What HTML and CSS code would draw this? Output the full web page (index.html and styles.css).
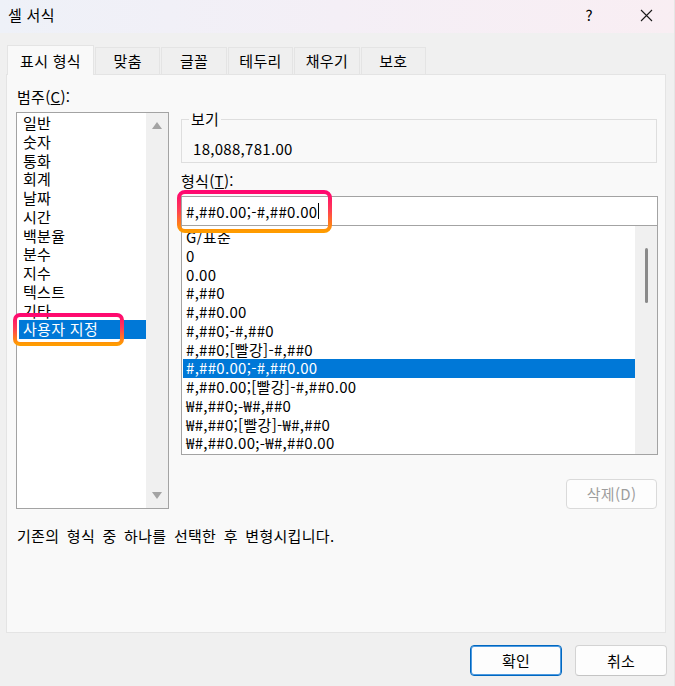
FILE: index.html
```html
<!DOCTYPE html>
<html lang="ko">
<head>
<meta charset="utf-8">
<title>셀 서식</title>
<link rel="stylesheet" href="styles.css">
</head>
<body>
<div class="window">
  <div class="titlebar">
    <span class="title">셀 서식</span>
    <span class="help">?</span>
    <span class="close">
      <svg width="13" height="13" viewBox="0 0 13 13"><path d="M1 1 L12 12 M12 1 L1 12" stroke="#1a1a1a" stroke-width="1.1" fill="none"/></svg>
    </span>
  </div>

  <div class="tabs">
    <div class="tab active">표시 형식</div>
    <div class="tab">맞춤</div>
    <div class="tab">글꼴</div>
    <div class="tab">테두리</div>
    <div class="tab">채우기</div>
    <div class="tab">보호</div>
  </div>

  <div class="panel">
    <div class="main">
      <div class="left-col">
        <div class="label">범주(<u>C</u>):</div>
        <div class="listbox cat-list">
          <ul class="items">
            <li>일반</li>
            <li>숫자</li>
            <li>통화</li>
            <li>회계</li>
            <li>날짜</li>
            <li>시간</li>
            <li>백분율</li>
            <li>분수</li>
            <li>지수</li>
            <li>텍스트</li>
            <li>기타</li>
            <li class="sel">사용자 지정</li>
          </ul>
          <div class="vscroll arrows">
            <span class="arrow up"></span>
            <span class="arrow down"></span>
          </div>
        </div>
      </div>

      <div class="right-col">
        <fieldset class="preview">
          <legend>보기</legend>
          <div class="preview-value">18,088,781.00</div>
        </fieldset>

        <div class="label fmt-label">형식(<u>T</u>):</div>
        <div class="fmt-input">#,##0.00;-#,##0.00<span class="caret"></span></div>
        <div class="listbox fmt-list">
          <ul class="items">
            <li>G/표준</li>
            <li>0</li>
            <li>0.00</li>
            <li>#,##0</li>
            <li>#,##0.00</li>
            <li>#,##0;-#,##0</li>
            <li>#,##0;[빨강]-#,##0</li>
            <li class="sel">#,##0.00;-#,##0.00</li>
            <li>#,##0.00;[빨강]-#,##0.00</li>
            <li>₩#,##0;-₩#,##0</li>
            <li>₩#,##0;[빨강]-₩#,##0</li>
            <li>₩#,##0.00;-₩#,##0.00</li>
          </ul>
          <div class="vscroll thin">
            <span class="thumb"></span>
          </div>
        </div>

        <div class="delete-row">
          <button class="btn disabled">삭제(D)</button>
        </div>
      </div>
    </div>

    <p class="desc">기존의 형식 중 하나를 선택한 후 변형시킵니다.</p>
  </div>

  <div class="footer">
    <button class="btn primary">확인</button>
    <button class="btn">취소</button>
  </div>

  <svg class="mark mark-cat" width="111" height="33" viewBox="0 0 111 33">
    <defs>
      <linearGradient id="g1" x1="0" y1="0" x2="0" y2="1">
        <stop offset="0" stop-color="#ff0870"/>
        <stop offset="0.45" stop-color="#ff3b55"/>
        <stop offset="1" stop-color="#ff9c00"/>
      </linearGradient>
    </defs>
    <rect x="2" y="2" width="107" height="29" rx="5" ry="5" fill="none" stroke="url(#g1)" stroke-width="4"/>
  </svg>
  <svg class="mark mark-fmt" width="155" height="43" viewBox="0 0 155 43">
    <defs>
      <linearGradient id="g2" x1="0" y1="0" x2="0" y2="1">
        <stop offset="0" stop-color="#ff0870"/>
        <stop offset="0.45" stop-color="#ff3b55"/>
        <stop offset="1" stop-color="#ff9c00"/>
      </linearGradient>
    </defs>
    <rect x="2" y="2" width="151" height="39" rx="6" ry="6" fill="none" stroke="url(#g2)" stroke-width="4"/>
  </svg>
</div>
</body>
</html>
```

FILE: styles.css
```css
* { box-sizing: border-box; }

html, body {
  margin: 0;
  padding: 0;
  background: #f0f0f0;
}

.window {
  position: relative;
  width: 675px;
  height: 686px;
  overflow: hidden;
  background: #f0f0f0;
  font-family: "Noto Sans CJK KR", "Noto Sans", sans-serif;
  font-size: 15px;
  letter-spacing: 0.3px;
  color: #000;
  border-right: 1px solid #e6e6e6;
}

ul { margin: 0; padding: 0; list-style: none; }

/* Title bar */
.titlebar {
  height: 33px;
  display: flex;
  align-items: flex-start;
  padding: 5px 0 0 8px;
  background: linear-gradient(90deg, #eef1f8 0%, #f4eff6 50%, #f9eef3 100%);
}
.title {
  line-height: 20px;
  flex: 1;
}
.help {
  line-height: 20px;
  font-size: 15px;
  margin-right: 47px;
}
.close {
  display: flex;
  margin-top: 4px;
  margin-right: 21px;
}

/* Tabs */
.tabs {
  display: flex;
  align-items: flex-end;
  height: 29px;
  margin-top: 12px;
  padding-left: 7px;
  position: relative;
  z-index: 2;
}
.tab {
  height: 27px;
  min-width: 65.4px;
  padding: 0 10px;
  line-height: 26px;
  text-align: center;
  border: 1px solid #e4e4e4;
  border-bottom: none;
  margin-right: 1px;
  background: #efefef;
}
.tab.active {
  min-width: 87px;
  padding: 0 12px;
  height: 30px;
  line-height: 29px;
  margin-bottom: -1px;
  background: #f9f9f9;
  border-color: #e4e4e4;
}

/* Panel */
.panel {
  margin-left: 6px;
  width: 660px;
  height: 559px;
  background: #f9f9f9;
  border: 1px solid #e4e4e4;
  position: relative;
  z-index: 1;
}
.main {
  display: flex;
  padding-left: 9px;
}
.label {
  line-height: 20px;
  padding-left: 1px;
}
.left-col {
  padding-top: 12px;
}
.left-col .label { margin-bottom: 5px; }

.listbox {
  display: flex;
  background: #fff;
  border: 1px solid #a3a3a3;
  overflow: hidden;
}
.listbox .items {
  flex: 1;
  min-width: 0;
}
.listbox li {
  line-height: 18.76px;
  height: 18.76px;
  white-space: nowrap;
}
.listbox li.sel {
  background: #0078d7;
  color: #fff;
}

.cat-list {
  width: 153px;
  height: 397px;
}
.cat-list .items { padding-top: 1px; }
.cat-list li {
  margin-left: 2px;
  padding-left: 4px;
}

.vscroll {
  background: #f0f0f0;
}
.vscroll.arrows {
  width: 22px;
  display: flex;
  flex-direction: column;
  justify-content: space-between;
  align-items: center;
  padding: 9px 0 9px;
}
.arrow {
  width: 0;
  height: 0;
  border-left: 5px solid transparent;
  border-right: 5px solid transparent;
}
.arrow.up { border-bottom: 7px solid #a3a3a3; }
.arrow.down { border-top: 7px solid #a3a3a3; }

/* Right column */
.right-col {
  margin-left: 12px;
  width: 477px;
  padding-top: 36px;
}
.preview {
  margin: 0;
  width: 476px;
  height: 52px;
  padding: 0 0 0 11px;
  border: 1px solid #dedede;
}
.preview legend {
  padding: 0 2px;
  margin-left: -4px;
  line-height: 16px;
}
.preview-value {
  line-height: 20px;
  margin-top: 12px;
}

.fmt-label {
  margin-top: 8px;
  padding-left: 0;
}
.fmt-input {
  margin-top: 5px;
  height: 30px;
  border: 1px solid #a3a3a3;
  background: #fff;
  padding-left: 4px;
  line-height: 27px;
  display: flex;
  align-items: center;
}
.caret {
  display: inline-block;
  width: 1px;
  height: 16px;
  background: #000;
  margin-left: 1px;
}
.fmt-list {
  margin-top: -1px;
  height: 230px;
}
.fmt-list .items { padding-top: 2px; }
.fmt-list li {
  margin-left: 1px;
  padding-left: 3px;
}
.vscroll.thin {
  width: 22px;
  display: flex;
  justify-content: center;
  padding-top: 22px;
}
.thumb {
  width: 3px;
  height: 55px;
  border-radius: 2px;
  background: #8a8a8a;
}

.delete-row {
  display: flex;
  justify-content: flex-end;
  padding-right: 1px;
  margin-top: 24px;
}

.btn {
  font-family: inherit;
  font-size: 15px;
  letter-spacing: 0.3px;
  height: 31px;
  width: 92px;
  border: 1px solid #d3d3d3;
  border-bottom-color: #c4c4c4;
  border-radius: 4px;
  background: #fdfdfd;
  color: #000;
  padding: 0;
  line-height: 28px;
}
.btn.disabled {
  width: 91px;
  height: 30px;
  color: #9d9d9d;
  border-color: #dadada;
}
.btn.primary {
  border: 1px solid #0067c0;
  box-shadow: inset 0 0 0 1px #4d9ae0;
  background: #fdfdfd;
}

.desc {
  margin: 17px 0 0 10px;
  line-height: 20px;
  word-spacing: 3px;
}

.footer {
  display: flex;
  justify-content: flex-end;
  gap: 13px;
  padding-right: 7px;
  margin-top: 12px;
}

.mark {
  position: absolute;
  z-index: 5;
}
.mark-cat { left: 13px; top: 313px; }
.mark-fmt { left: 177px; top: 190px; }
```
